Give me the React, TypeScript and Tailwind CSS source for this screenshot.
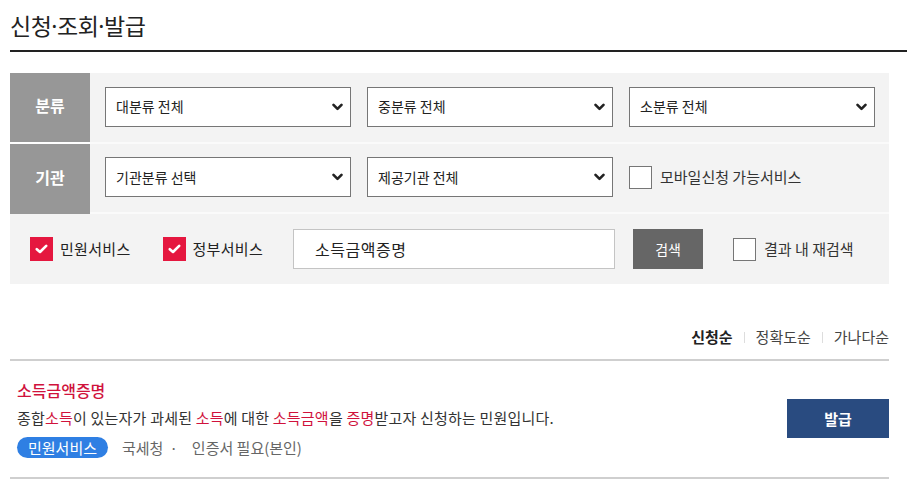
import React from 'react';

const Chevron: React.FC = () => (
  <svg className="w-[11px] h-[8px]" viewBox="0 0 11 8" fill="none">
    <path d="M1.5 1.8 5.5 5.8 9.5 1.8" stroke="#222" strokeWidth="2.6" strokeLinecap="round" strokeLinejoin="round" />
  </svg>
);

const SelectBox: React.FC<{ label: string }> = ({ label }) => (
  <div className="w-[246px] h-[40px] bg-white border border-[#767676] flex items-center justify-between pl-[10px] pr-[7px] text-[14px] text-[#222]">
    <span>{label}</span>
    <Chevron />
  </div>
);

const CheckOn: React.FC<{ label: string }> = ({ label }) => (
  <label className="flex items-center gap-[7px]">
    <span className="w-[23px] h-[24px] bg-[#e5173f] flex items-center justify-center">
      <svg className="w-[13px] h-[10px]" viewBox="0 0 13 10" fill="none">
        <path d="M1.8 5.2 5 8 11.2 1.8" stroke="#fff" strokeWidth="2.6" strokeLinecap="round" strokeLinejoin="round" />
      </svg>
    </span>
    <span className="text-[15px] tracking-[0.3px] text-[#222]">{label}</span>
  </label>
);

const CheckOff: React.FC<{ label: string }> = ({ label }) => (
  <label className="flex items-center gap-[8px]">
    <span className="w-[23px] h-[23px] bg-white border border-[#767676]" />
    <span className="text-[15px] text-[#333]">{label}</span>
  </label>
);

const Red: React.FC<{ children: React.ReactNode }> = ({ children }) => (
  <span className="text-[#d0123c]">{children}</span>
);

const Dot: React.FC = () => <span className="font-['Noto_Sans',sans-serif]">·</span>;

const App: React.FC = () => {
  return (
    <div className="min-h-screen bg-white pl-[10px] pt-[10px] font-['Noto_Sans_CJK_KR','Noto_Sans',sans-serif]">
      <h1 className="text-[23px] leading-[30px] text-[#222] tracking-[-0.5px] pb-[9px] border-b-[2px] border-[#222]">
        신청<Dot />조회<Dot />발급
      </h1>

      <div className="w-[879px] mt-[21px] bg-[#f3f3f3]">
        <div className="flex h-[71px]">
          <div className="w-[80px] bg-[#979797] border-b-2 border-white flex items-center justify-center pb-[6px] text-white font-bold text-[16px]">
            분류
          </div>
          <div className="flex-1 flex items-center gap-[16px] pl-[15px] border-b-2 border-[#fafafa] pb-[2px]">
            <SelectBox label="대분류 전체" />
            <SelectBox label="중분류 전체" />
            <SelectBox label="소분류 전체" />
          </div>
        </div>
        <div className="flex h-[70px]">
          <div className="w-[80px] bg-[#979797] flex items-center justify-center pb-[4px] text-white font-bold text-[16px]">
            기관
          </div>
          <div className="flex-1 flex items-center gap-[16px] pl-[15px] border-b-2 border-[#fafafa] pb-[2px]">
            <SelectBox label="기관분류 선택" />
            <SelectBox label="제공기관 전체" />
            <CheckOff label="모바일신청 가능서비스" />
          </div>
        </div>
        <div className="flex items-center h-[70px] pl-[20px]">
          <CheckOn label="민원서비스" />
          <div className="ml-[32px]">
            <CheckOn label="정부서비스" />
          </div>
          <div className="ml-[30px] w-[322px] h-[40px] bg-white border border-[#c4c4c4] flex items-center pl-[21px] text-[16px] tracking-[0.5px] text-[#222]">
            소득금액증명
          </div>
          <button className="ml-[18px] w-[70px] h-[40px] bg-[#666] text-white text-[14px]">검색</button>
          <div className="ml-[30px]">
            <CheckOff label="결과 내 재검색" />
          </div>
        </div>
      </div>

      <div className="w-[879px] flex justify-end items-center gap-[11px] mt-[42px] text-[15px] text-[#444]">
        <span className="font-bold text-[#222]">신청순</span>
        <span className="w-px h-[11px] bg-[#ddd]" />
        <span>정확도순</span>
        <span className="w-px h-[11px] bg-[#ddd]" />
        <span>가나다순</span>
      </div>

      <div className="w-[879px] mt-[10px] border-t-2 border-[#cfcfcf] border-b-2 pl-[7px] pt-[18px] pb-[18px] flex items-center justify-between">
        <div>
          <div className="text-[16px] font-medium leading-[22px] text-[#d0123c]">소득금액증명</div>
          <div className="mt-[7px] text-[15px] leading-[20px] tracking-[0.2px] text-[#333]">
            종합<Red>소득</Red>이 있는자가 과세된 <Red>소득</Red>에 대한 <Red>소득금액</Red>을 <Red>증명</Red>받고자 신청하는 민원입니다.
          </div>
          <div className="mt-[9px] flex items-center text-[15px] text-[#666]">
            <span className="h-[21px] px-[11px] rounded-full bg-[#2f7fe3] text-white flex items-center leading-none">민원서비스</span>
            <span className="ml-[14px]">국세청</span>
            <span className="ml-[6px]">·</span>
            <span className="ml-[14px]">인증서 필요(본인)</span>
          </div>
        </div>
        <button className="w-[102px] h-[39px] bg-[#294b80] text-white font-bold text-[15px]">발급</button>
      </div>
    </div>
  );
};

export default App;
